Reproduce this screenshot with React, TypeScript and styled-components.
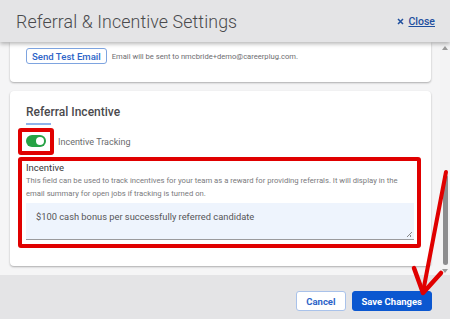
import React from 'react'
import styled, { createGlobalStyle } from 'styled-components'

const GlobalStyle = createGlobalStyle`
  html, body {
    margin: 0;
    padding: 0;
    overflow: hidden;
  }
  body {
    font-family: Roboto, "Liberation Sans", sans-serif;
  }
`

const Page = styled.div`
  position: relative;
  width: 450px;
  height: 319px;
  display: flex;
  flex-direction: column;
  background: #e4e4e6;
  overflow: hidden;
`

const Header = styled.div`
  position: relative;
  z-index: 2;
  height: 42px;
  flex: none;
  display: flex;
  align-items: center;
  justify-content: space-between;
  padding: 0 15px 0 16px;
  background: #e4e4e6;
  box-shadow: 0 2px 4px rgba(0, 0, 0, 0.28);
`

const Title = styled.h1`
  margin: 0;
  font-size: 17.8px;
  font-weight: 300;
  color: #4a4a4d;
  letter-spacing: 0.1px;
`

const CloseLink = styled.a`
  display: flex;
  align-items: center;
  gap: 4px;
  font-size: 10.5px;
  font-weight: 500;
  color: #1f4f9e;
  cursor: pointer;

  span {
    text-decoration: underline;
  }
`

const Body = styled.div`
  flex: 1;
  display: flex;
  background: #f5f5f6;
  min-height: 0;
`

const Content = styled.div`
  flex: 1;
  display: flex;
  flex-direction: column;
  gap: 9px;
  padding: 0 9px 0 10px;
`

const Card = styled.div<{ $cut?: boolean }>`
  background: #fff;
  border-radius: ${(p) => (p.$cut ? '0 0 4px 4px' : '4px')};
  box-shadow: 0 1px 2px rgba(0, 0, 0, 0.3);
  padding: ${(p) => (p.$cut ? '6px 16px 18px' : '14px 16px 18px')};
`

const Row = styled.div`
  display: flex;
  align-items: center;
  gap: 5px;
`

const OutlineButton = styled.button<{ $size?: 'sm' | 'md' }>`
  font-family: inherit;
  font-weight: ${(p) => (p.$size === 'md' ? 700 : 500)};
  font-size: ${(p) => (p.$size === 'md' ? '9.5px' : '9.6px')};
  color: #2d64c8;
  background: #fff;
  border: 1px solid ${(p) => (p.$size === 'md' ? '#a9c2ea' : '#7ea4e0')};
  border-radius: 3px;
  height: ${(p) => (p.$size === 'md' ? '20px' : '16px')};
  padding: ${(p) => (p.$size === 'md' ? '0 9px' : '0 5px')};
  cursor: pointer;
`

const PrimaryButton = styled.button`
  font-family: inherit;
  font-weight: 700;
  font-size: 9.5px;
  color: #fff;
  background: #0b57d0;
  border: 1px solid #0b57d0;
  border-radius: 3px;
  height: 20px;
  padding: 0 9px;
  cursor: pointer;
`

const Hint = styled.span`
  font-size: 7.6px;
  color: #6d6d70;
`

const SectionTitle = styled.h2`
  margin: 0;
  font-size: 12px;
  line-height: 14px;
  font-weight: 500;
  color: #4a4a4d;
`

const TitleBar = styled.div`
  width: 25px;
  height: 2px;
  margin-top: 4px;
  background: #8fb3ea;
`

const Marker = styled.div<{ $wide?: boolean }>`
  border: 4px solid #e00000;
  border-radius: 3px;
  margin-left: -8px;
  margin-right: ${(p) => (p.$wide ? '-6px' : '0')};
  margin-top: ${(p) => (p.$wide ? '2px' : '0')};
  padding: ${(p) => (p.$wide ? '1px 3px 4px 4px' : '3px 4px 4px')};
`

const ToggleRow = styled.div`
  display: flex;
  align-items: center;
  gap: 4px;
  margin-top: 3px;
`

const Switch = styled.div<{ $on: boolean }>`
  position: relative;
  width: 20px;
  height: 12px;
  border-radius: 6px;
  background: ${(p) => (p.$on ? '#26a245' : '#bbb')};

  &::after {
    content: '';
    position: absolute;
    top: 2px;
    left: ${(p) => (p.$on ? '10px' : '2px')};
    width: 8px;
    height: 8px;
    border-radius: 50%;
    background: #fff;
  }
`

const SwitchLabel = styled.span`
  font-size: 9px;
  color: #6a6a6d;
`

const FieldLabel = styled.div`
  font-size: 9.5px;
  line-height: 12px;
  color: #38383b;
`

const FieldHelp = styled.p`
  margin: 0 0 3px;
  font-size: 7.7px;
  line-height: 13px;
  color: #7a7a7d;
`

const TextArea = styled.div`
  position: relative;
  height: 37px;
  box-sizing: border-box;
  padding: 8px 10px;
  background: #eef4fd;
  border-bottom: 1px solid #9a9a9d;
  font-size: 9.3px;
  color: #555558;

  &::after {
    content: '';
    position: absolute;
    right: 2px;
    bottom: 2px;
    width: 5px;
    height: 5px;
    background: linear-gradient(135deg, transparent 45%, #888 45%, #888 55%, transparent 55%, transparent 70%, #888 70%, #888 80%, transparent 80%);
  }
`

const ScrollTrack = styled.div`
  width: 10px;
  flex: none;
  display: flex;
  flex-direction: column;
  align-items: center;
  padding: 4px 0 2px;
  background: #f3f3f4;
`

const ScrollArrow = styled.div<{ $down?: boolean }>`
  width: 0;
  height: 0;
  border-left: 3px solid transparent;
  border-right: 3px solid transparent;
  ${(p) => (p.$down ? 'border-top: 4px solid #9a9a9a;' : 'border-bottom: 4px solid #9a9a9a;')}
`

const ScrollSpace = styled.div`
  flex: 1;
  display: flex;
  flex-direction: column;
  justify-content: flex-end;
  padding: 0 0 4px;
`

const ScrollThumb = styled.div`
  width: 5px;
  height: 90px;
  border-radius: 3px;
  background: #8c8c8e;
`

const Footer = styled.div`
  height: 44px;
  flex: none;
  box-sizing: border-box;
  display: flex;
  justify-content: flex-end;
  align-items: flex-start;
  gap: 6px;
  padding: 16px 18px 0 0;
  background: #e4e4e6;
`

const ArrowOverlay = styled.svg`
  position: absolute;
  left: 0;
  top: 0;
  pointer-events: none;
  z-index: 3;
`

export default function App() {
  return (
    <Page>
      <GlobalStyle />
      <Header>
        <Title>Referral &amp; Incentive Settings</Title>
        <CloseLink>
          <svg width="7" height="7" viewBox="0 0 7 7">
            <path d="M1 1L6 6M6 1L1 6" stroke="#1f4f9e" strokeWidth="1.5" />
          </svg>
          <span>Close</span>
        </CloseLink>
      </Header>
      <Body>
        <Content>
          <Card $cut>
            <Row>
              <OutlineButton>Send Test Email</OutlineButton>
              <Hint>Email will be sent to nmcbride+demo@careerplug.com.</Hint>
            </Row>
          </Card>
          <Card>
            <SectionTitle>Referral Incentive</SectionTitle>
            <TitleBar />
            <ToggleRow>
              <Marker>
                <Switch $on />
              </Marker>
              <SwitchLabel>Incentive Tracking</SwitchLabel>
            </ToggleRow>
            <Marker $wide>
              <FieldLabel>Incentive</FieldLabel>
              <FieldHelp>
                This field can be used to track incentives for your team as a reward for providing referrals. It will display in the
                email summary for open jobs if tracking is turned on.
              </FieldHelp>
              <TextArea>$100 cash bonus per successfully referred candidate</TextArea>
            </Marker>
          </Card>
        </Content>
        <ScrollTrack>
          <ScrollArrow />
          <ScrollSpace>
            <ScrollThumb />
          </ScrollSpace>
          <ScrollArrow $down />
        </ScrollTrack>
      </Body>
      <Footer>
        <OutlineButton $size="md">Cancel</OutlineButton>
        <PrimaryButton>Save Changes</PrimaryButton>
      </Footer>
      <ArrowOverlay width="450" height="319" viewBox="0 0 450 319">
        <path d="M446 172L423 292" stroke="#e00000" strokeWidth="4" strokeLinecap="round" fill="none" />
        <path d="M414 268L423 293L441 273" stroke="#e00000" strokeWidth="4.5" strokeLinecap="round" strokeLinejoin="round" fill="none" />
      </ArrowOverlay>
    </Page>
  )
}
